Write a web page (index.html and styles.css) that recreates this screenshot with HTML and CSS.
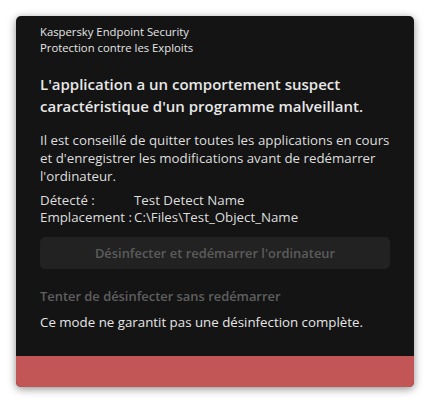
FILE: index.html
```html
<!DOCTYPE html>
<html lang="fr">
<head>
<meta charset="utf-8">
<link rel="stylesheet" href="styles.css">
</head>
<body>
<div class="window">
  <div class="content">
    <div class="app">
      <div>Kaspersky Endpoint Security</div>
      <div>Protection contre les Exploits</div>
    </div>
    <h1 class="title">L'application a un comportement suspect caractéristique d'un programme malveillant.</h1>
    <p class="msg">Il est conseillé de quitter toutes les applications en cours et d'enregistrer les modifications avant de redémarrer l'ordinateur.</p>
    <div class="details">
      <span>Détecté :</span><span>Test Detect Name</span>
      <span>Emplacement :</span><span>C:\Files\Test_Object_Name</span>
    </div>
    <button class="btn" disabled>Désinfecter et redémarrer l'ordinateur</button>
    <div class="link">Tenter de désinfecter sans redémarrer</div>
    <div class="note">Ce mode ne garantit pas une désinfection complète.</div>
  </div>
  <div class="footer"></div>
</div>
</body>
</html>
```
FILE: styles.css
```css
html, body { margin: 0; padding: 0; background: #ffffff; }
body { font-family: "Open Sans", "Noto Sans", sans-serif; }
.window {
  margin: 16px;
  width: 398px;
  height: 371px;
  background: #141414;
  border-radius: 5px;
  box-shadow: 0 2px 8px rgba(0,0,0,0.45);
  display: flex;
  flex-direction: column;
  overflow: hidden;
}
.content { flex: 1; padding: 8px 24px 0 24px; display: flex; flex-direction: column; }
.app { font-size: 11.3px; line-height: 16px; color: #e6e6e6; }
.title { margin: 17px 0 0 0; font-size: 15px; line-height: 22px; font-weight: 600; color: #e8e8e8; }
.msg { margin: 14px 0 0 0; font-size: 13.3px; line-height: 18px; color: #dedede; }
.details { margin-top: 7px; display: grid; grid-template-columns: auto 1fr; column-gap: 2px; row-gap: 0; font-size: 13.3px; line-height: 17px; color: #dedede; }
.btn {
  margin-top: 11px;
  height: 32px;
  width: 350px;
  border: none;
  border-radius: 5px;
  background: #222222;
  color: #5c5c5c;
  font-family: inherit;
  font-size: 12.9px;
  font-weight: 600;
}
.link { margin-top: 18px; font-size: 12.9px; line-height: 18px; font-weight: 600; color: #5f5f5f; }
.note { margin-top: 8px; font-size: 13.3px; line-height: 18px; color: #e6e6e6; }
.footer { height: 31px; background: #c25555; }
```
